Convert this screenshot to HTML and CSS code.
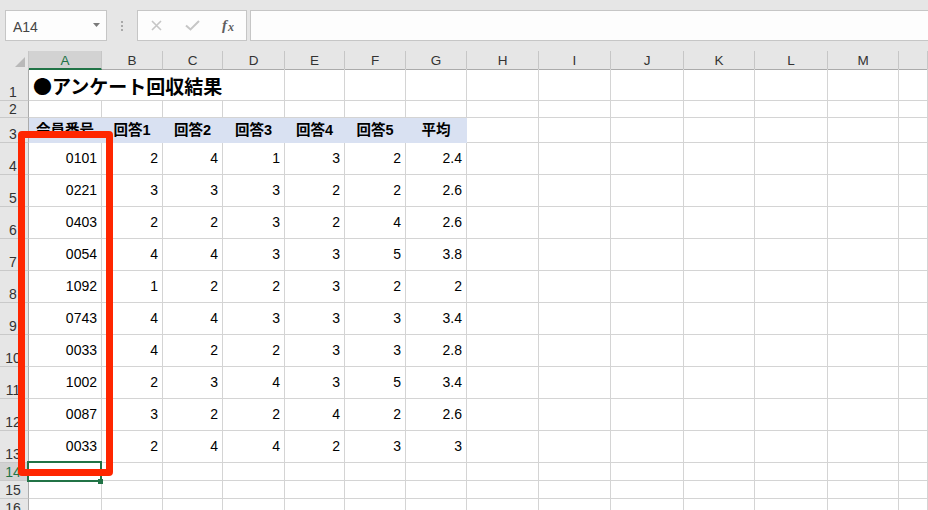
FILE: index.html
```html
<!DOCTYPE html>
<html lang="ja">
<head>
<meta charset="utf-8">
<title>アンケート回収結果</title>
<link rel="stylesheet" href="styles.css">
</head>
<body>
<div class="app">
  <div class="fbar">
    <div class="namebox"><span class="nb-text">A14</span><svg class="nb-arrow" width="7" height="4" viewBox="0 0 7 4"><path d="M0 0H7L3.5 4Z" fill="#7a7a7a"/></svg></div>
    <div class="grip"><span></span><span></span><span></span></div>
    <div class="fbtns">
      <span class="fbtn"><svg width="11" height="11" viewBox="0 0 11 11"><path d="M1 1L10 10M10 1L1 10" stroke="#c6c6c6" stroke-width="1.6"/></svg></span>
      <span class="fbtn"><svg width="15" height="11" viewBox="0 0 15 11"><path d="M1 5.5L5.5 9.5L14 1" fill="none" stroke="#c6c6c6" stroke-width="2"/></svg></span>
      <span class="fbtn fx"><i>f</i><i class="sub">x</i></span>
    </div>
    <div class="finput"></div>
  </div>

  <div class="sheet">
    <div class="row hdr">
      <div class="corner"><svg width="10" height="10" viewBox="0 0 10 10"><path d="M10 0V10H0Z" fill="#b9b9b9"/></svg></div>
      <div class="ch sel">A</div><div class="ch">B</div><div class="ch">C</div><div class="ch">D</div><div class="ch">E</div><div class="ch">F</div><div class="ch">G</div><div class="ch">H</div><div class="ch">I</div><div class="ch">J</div><div class="ch">K</div><div class="ch">L</div><div class="ch">M</div><div class="ch"></div>
    </div>

    <div class="row r1">
      <div class="rh">1</div>
      <div class="c title">●アンケート回収結果</div>
      <div class="c"></div><div class="c"></div><div class="c"></div><div class="c"></div><div class="c"></div><div class="c"></div><div class="c"></div><div class="c"></div><div class="c"></div><div class="c"></div>
    </div>

    <div class="row r2">
      <div class="rh">2</div>
      <div class="c"></div><div class="c"></div><div class="c"></div><div class="c"></div><div class="c"></div><div class="c"></div><div class="c"></div><div class="c"></div><div class="c"></div><div class="c"></div><div class="c"></div><div class="c"></div><div class="c"></div><div class="c"></div>
    </div>

    <div class="row r3">
      <div class="rh">3</div>
      <div class="c th">会員番号</div><div class="c th">回答1</div><div class="c th">回答2</div><div class="c th">回答3</div><div class="c th">回答4</div><div class="c th">回答5</div><div class="c th">平均</div>
      <div class="c"></div><div class="c"></div><div class="c"></div><div class="c"></div><div class="c"></div><div class="c"></div><div class="c"></div>
    </div>

    <div class="row rd">
      <div class="rh">4</div>
      <div class="c n">0101</div><div class="c n">2</div><div class="c n">4</div><div class="c n">1</div><div class="c n">3</div><div class="c n">2</div><div class="c n">2.4</div>
      <div class="c"></div><div class="c"></div><div class="c"></div><div class="c"></div><div class="c"></div><div class="c"></div><div class="c"></div>
    </div>
    <div class="row rd">
      <div class="rh">5</div>
      <div class="c n">0221</div><div class="c n">3</div><div class="c n">3</div><div class="c n">3</div><div class="c n">2</div><div class="c n">2</div><div class="c n">2.6</div>
      <div class="c"></div><div class="c"></div><div class="c"></div><div class="c"></div><div class="c"></div><div class="c"></div><div class="c"></div>
    </div>
    <div class="row rd">
      <div class="rh">6</div>
      <div class="c n">0403</div><div class="c n">2</div><div class="c n">2</div><div class="c n">3</div><div class="c n">2</div><div class="c n">4</div><div class="c n">2.6</div>
      <div class="c"></div><div class="c"></div><div class="c"></div><div class="c"></div><div class="c"></div><div class="c"></div><div class="c"></div>
    </div>
    <div class="row rd">
      <div class="rh">7</div>
      <div class="c n">0054</div><div class="c n">4</div><div class="c n">4</div><div class="c n">3</div><div class="c n">3</div><div class="c n">5</div><div class="c n">3.8</div>
      <div class="c"></div><div class="c"></div><div class="c"></div><div class="c"></div><div class="c"></div><div class="c"></div><div class="c"></div>
    </div>
    <div class="row rd">
      <div class="rh">8</div>
      <div class="c n">1092</div><div class="c n">1</div><div class="c n">2</div><div class="c n">2</div><div class="c n">3</div><div class="c n">2</div><div class="c n">2</div>
      <div class="c"></div><div class="c"></div><div class="c"></div><div class="c"></div><div class="c"></div><div class="c"></div><div class="c"></div>
    </div>
    <div class="row rd">
      <div class="rh">9</div>
      <div class="c n">0743</div><div class="c n">4</div><div class="c n">4</div><div class="c n">3</div><div class="c n">3</div><div class="c n">3</div><div class="c n">3.4</div>
      <div class="c"></div><div class="c"></div><div class="c"></div><div class="c"></div><div class="c"></div><div class="c"></div><div class="c"></div>
    </div>
    <div class="row rd">
      <div class="rh">10</div>
      <div class="c n">0033</div><div class="c n">4</div><div class="c n">2</div><div class="c n">2</div><div class="c n">3</div><div class="c n">3</div><div class="c n">2.8</div>
      <div class="c"></div><div class="c"></div><div class="c"></div><div class="c"></div><div class="c"></div><div class="c"></div><div class="c"></div>
    </div>
    <div class="row rd">
      <div class="rh">11</div>
      <div class="c n">1002</div><div class="c n">2</div><div class="c n">3</div><div class="c n">4</div><div class="c n">3</div><div class="c n">5</div><div class="c n">3.4</div>
      <div class="c"></div><div class="c"></div><div class="c"></div><div class="c"></div><div class="c"></div><div class="c"></div><div class="c"></div>
    </div>
    <div class="row rd">
      <div class="rh">12</div>
      <div class="c n">0087</div><div class="c n">3</div><div class="c n">2</div><div class="c n">2</div><div class="c n">4</div><div class="c n">2</div><div class="c n">2.6</div>
      <div class="c"></div><div class="c"></div><div class="c"></div><div class="c"></div><div class="c"></div><div class="c"></div><div class="c"></div>
    </div>
    <div class="row rd">
      <div class="rh">13</div>
      <div class="c n">0033</div><div class="c n">2</div><div class="c n">4</div><div class="c n">4</div><div class="c n">2</div><div class="c n">3</div><div class="c n">3</div>
      <div class="c"></div><div class="c"></div><div class="c"></div><div class="c"></div><div class="c"></div><div class="c"></div><div class="c"></div>
    </div>

    <div class="row rs">
      <div class="rh sel">14</div>
      <div class="c"></div><div class="c"></div><div class="c"></div><div class="c"></div><div class="c"></div><div class="c"></div><div class="c"></div><div class="c"></div><div class="c"></div><div class="c"></div><div class="c"></div><div class="c"></div><div class="c"></div><div class="c"></div>
    </div>
    <div class="row rs">
      <div class="rh">15</div>
      <div class="c"></div><div class="c"></div><div class="c"></div><div class="c"></div><div class="c"></div><div class="c"></div><div class="c"></div><div class="c"></div><div class="c"></div><div class="c"></div><div class="c"></div><div class="c"></div><div class="c"></div><div class="c"></div>
    </div>
    <div class="row rs">
      <div class="rh">16</div>
      <div class="c"></div><div class="c"></div><div class="c"></div><div class="c"></div><div class="c"></div><div class="c"></div><div class="c"></div><div class="c"></div><div class="c"></div><div class="c"></div><div class="c"></div><div class="c"></div><div class="c"></div><div class="c"></div>
    </div>

    <div class="selbox"></div>
    <div class="handle"></div>
    <div class="mark"></div>
  </div>
</div>
</body>
</html>
```

FILE: styles.css
```css
html, body {
  margin: 0;
  padding: 0;
  background: #ffffff;
}
body {
  width: 928px;
  height: 510px;
  overflow: hidden;
  font-family: "Liberation Sans", "Noto Sans CJK JP", sans-serif;
  color: #000;
}
.app {
  width: 928px;
}

/* formula bar */
.fbar {
  height: 51px;
  box-sizing: border-box;
  background: #e6e6e6;
  display: flex;
  align-items: flex-start;
  padding: 10px 0 0 5px;
}
.namebox {
  width: 102px;
  height: 31px;
  box-sizing: border-box;
  border: 1px solid #c6c6c6;
  background: #fdfdfd;
  display: flex;
  align-items: center;
  justify-content: space-between;
  padding: 0 6px 0 7px;
}
.nb-text {
  font-size: 14px;
  color: #444;
  padding-top: 3px;
}
.nb-arrow {
  margin-top: -2px;
}
.grip {
  width: 30px;
  height: 31px;
  display: flex;
  flex-direction: column;
  align-items: center;
  justify-content: center;
  gap: 2px;
}
.grip span {
  width: 2px;
  height: 2px;
  background: #a9a9a9;
}
.fbtns {
  width: 110px;
  height: 31px;
  box-sizing: border-box;
  border: 1px solid #c6c6c6;
  background: #fdfdfd;
  display: flex;
}
.fbtn {
  width: 36px;
  display: flex;
  align-items: center;
  justify-content: center;
}
.fx {
  font-family: "Liberation Serif", serif;
  font-size: 15px;
  color: #5f5f5f;
  font-weight: bold;
}
.fx .sub {
  font-size: 12px;
  margin-left: 1px;
  padding-top: 3px;
}
.finput {
  flex: 1;
  height: 31px;
  box-sizing: border-box;
  border: 1px solid #c6c6c6;
  border-right: none;
  background: #fdfdfd;
  margin-left: 3px;
}

/* sheet */
.sheet {
  position: relative;
}
.row {
  display: grid;
  grid-template-columns: 29px 73px 61px 60px 62px 60px 61px 61px 72px 72px 73px 71px 73px 71px 1fr;
}
.hdr { height: 18px; }
.r1 { height: 32px; }
.r2 { height: 17px; }
.r3 { height: 25px; }
.rd { height: 32px; }
.rs { height: 18px; }

.corner {
  background: #e6e6e6;
  border-right: 1px solid #c6c6c6;
  border-bottom: 1px solid #ababab;
  display: flex;
  justify-content: flex-end;
  align-items: flex-end;
  padding: 0 3px 2px 0;
}
.ch {
  background: #e6e6e6;
  border-right: 1px solid #c6c6c6;
  border-bottom: 1px solid #ababab;
  display: flex;
  align-items: center;
  justify-content: center;
  font-size: 13.5px;
  color: #333;
  padding-top: 1px;
}
.ch.sel {
  background: #d2d2d2;
  color: #217346;
  border-bottom: 2px solid #217346;
  padding-top: 2px;
}
.rh {
  background: #e6e6e6;
  border-right: 1px solid #ababab;
  border-bottom: 1px solid #c9c9c9;
  display: flex;
  align-items: flex-end;
  justify-content: center;
  font-size: 14px;
  line-height: 1;
  color: #333;
  padding-bottom: 1px;
  padding-right: 2px;
}
.rh.sel {
  background: #d2d2d2;
  color: #217346;
}
.c {
  box-sizing: border-box;
  border-right: 1px solid #d4d4d4;
  border-bottom: 1px solid #d4d4d4;
  display: flex;
  align-items: center;
  white-space: nowrap;
  overflow: hidden;
  font-size: 14px;
  line-height: 1;
}
.row > div {
  box-sizing: border-box;
  min-width: 0;
}
.title {
  grid-column: span 4;
  font-family: "Noto Sans CJK JP", sans-serif;
  font-weight: bold;
  font-size: 19px;
  padding-left: 4px;
  padding-top: 1px;
  overflow: visible;
}
.th {
  background: #d9e1f2;
  border-color: #d9e1f2;
  justify-content: center;
  font-weight: bold;
  font-size: 14.5px;
  padding-top: 1px;
}
.n {
  justify-content: flex-end;
  padding-right: 4px;
  padding-bottom: 1px;
}

/* overlays */
.selbox {
  position: absolute;
  left: 27px;
  top: 410px;
  width: 75px;
  height: 21px;
  box-sizing: border-box;
  border: 2px solid #217346;
}
.handle {
  position: absolute;
  left: 98px;
  top: 428px;
  width: 5px;
  height: 5px;
  background: #217346;
}
.mark {
  position: absolute;
  left: 18px;
  top: 80px;
  width: 95px;
  height: 345px;
  box-sizing: border-box;
  border: 7px solid #ff2600;
  border-radius: 4px;
}
```
